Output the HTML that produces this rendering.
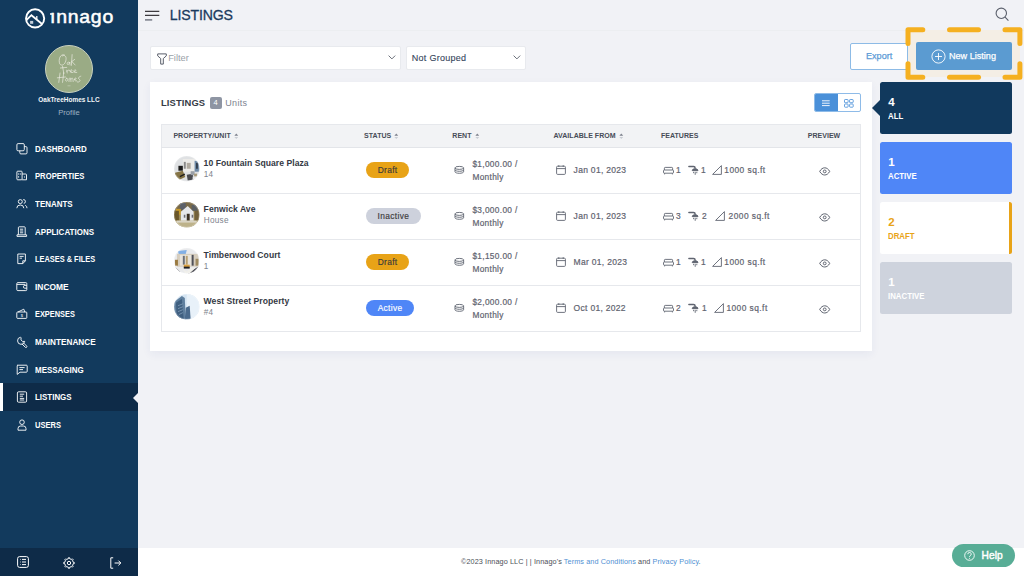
<!DOCTYPE html>
<html><head><meta charset="utf-8">
<style>
*{margin:0;padding:0;box-sizing:border-box}
html,body{width:1024px;height:576px;overflow:hidden}
body{position:relative;background:#f1f2f6;font-family:"Liberation Sans",sans-serif;color:#3a3f4a}
.abs{position:absolute}
svg{position:absolute;overflow:visible}
/* sidebar */
#side{position:absolute;left:0;top:0;width:138px;height:576px;background:#123a5d}
#sidebot{position:absolute;left:0;top:548px;width:138px;height:28px;background:#0e2b48}
.logo-t{position:absolute;left:49.6px;top:7.9px;font-size:18px;line-height:18px;color:#fff;letter-spacing:0.7px;-webkit-text-stroke:0.5px #fff;transform:scaleX(1.08);transform-origin:0 50%}
.avatar{position:absolute;left:45px;top:45px;width:48px;height:48px;border-radius:50%;background:#9aab85;border:1px solid #c9d1bf}
.org{position:absolute;left:0;width:138px;text-align:center;top:94.8px;font-size:7.6px;font-weight:bold;color:#f4f6f8;transform:scaleX(0.85);transform-origin:69px 50%}
.prof{position:absolute;left:0;width:138px;text-align:center;top:107.5px;font-size:7.6px;color:#9fb0c2}
.mi{position:absolute;left:35.4px;font-size:9.7px;font-weight:bold;color:#fff;line-height:10px;white-space:nowrap;transform-origin:0 50%}
.active-row{position:absolute;left:0;top:383px;width:138px;height:28px;background:#0e2b48}
.active-bar{position:absolute;left:0;top:383px;width:3px;height:28px;background:#fff}
.ico{stroke:#fff;fill:none;stroke-width:0.9}

.hdr-line{position:absolute;left:138px;top:30px;width:886px;height:1px;background:#eceef1}
.title{position:absolute;left:169.8px;top:5.3px;font-size:14.1px;color:#1b3b5e;line-height:20px;letter-spacing:-0.15px;-webkit-text-stroke:0.3px #1b3b5e}
.sel{position:absolute;top:46px;height:23.5px;background:#fff;border:1px solid #e8eaee;border-radius:2px}
.seltxt{position:absolute;top:53px;font-size:9.3px;line-height:11px;white-space:nowrap}
.btn-exp{position:absolute;left:850px;top:42.5px;width:58px;height:27px;background:#fff;border:1px solid #8dbbe6;border-radius:2px;color:#5b9ad6;font-size:9.8px;text-align:center;line-height:23px;-webkit-text-stroke:0.25px #5b9ad6}
.hl-fill{position:absolute;left:908px;top:29.8px;width:112px;height:47.5px;background:#f4eee5}
.btn-new{position:absolute;left:915.5px;top:42px;width:96.5px;height:27.8px;background:#5b9bd1;border-radius:2px}
.btn-new span{position:absolute;left:33.2px;top:8.1px;color:#fff;font-size:9.9px;line-height:11px;white-space:nowrap;-webkit-text-stroke:0.25px #fff;transform:scaleX(0.92);transform-origin:0 50%}
.card{position:absolute;left:150px;top:81.6px;width:722px;height:269.2px;background:#fff;box-shadow:0 3px 9px rgba(40,50,140,0.06)}
.ctitle{position:absolute;left:161px;top:97px;letter-spacing:0.12px;font-size:9.4px;font-weight:bold;color:#363b46;line-height:12px}
.badge4{position:absolute;left:209.5px;top:96.5px;width:12.3px;height:12.2px;background:#8e95a3;border-radius:2px;color:#fff;font-size:7.5px;text-align:center;line-height:12.2px}
.units{position:absolute;left:225.2px;top:98px;font-size:9px;letter-spacing:0.35px;color:#7d8390;line-height:11px}
.tog{position:absolute;left:814.3px;top:93.2px;width:46.4px;height:19.2px;border:1px solid #8ebbe8;border-radius:2px;background:#fff;overflow:hidden}
.tog .on{position:absolute;left:0;top:0;width:23px;height:100%;background:#4a90d9}
.tbl{position:absolute;left:161.3px;top:124px;width:699.4px;height:208px;border:1px solid #e6e8ec;background:#fff}
.th{position:absolute;left:161.3px;top:124px;width:699.4px;height:24px;background:#f2f3f5;border:1px solid #e6e8ec;border-bottom:1px solid #e3e5e9}
.thx{position:absolute;top:131.3px;font-size:7px;letter-spacing:0.04px;font-weight:bold;color:#474c57;line-height:9px;white-space:nowrap}
.rowline{position:absolute;left:161.3px;width:699.4px;height:1px;background:#e6e8ec}
.pname{position:absolute;left:203.6px;margin-top:-0.9px;font-size:8.6px;letter-spacing:0.04px;font-weight:bold;color:#343944;line-height:10px;white-space:nowrap}
.psub{position:absolute;left:203.8px;margin-top:-0.6px;letter-spacing:0.25px;font-size:8.2px;color:#7d838d;line-height:10px;white-space:nowrap}
.av{position:absolute;left:174.4px;width:25.3px;height:25.3px;border-radius:50%;overflow:hidden}
.pill{-webkit-text-stroke:0.15px currentColor;position:absolute;left:365.8px;height:16.3px;border-radius:9px;font-size:8.4px;letter-spacing:0.35px;line-height:16.8px;text-align:center;color:#3b3b3b}
.rent{-webkit-text-stroke:0.2px #5f6470;position:absolute;left:472.4px;margin-top:0.8px;font-size:8.3px;letter-spacing:0.33px;color:#5f6470;line-height:13.2px;white-space:nowrap}
.date{-webkit-text-stroke:0.2px #5f6470;position:absolute;left:573.6px;margin-top:0.6px;font-size:8.5px;letter-spacing:0.3px;color:#5f6470;line-height:10px;white-space:nowrap}
.feat{-webkit-text-stroke:0.2px #5f6470;position:absolute;margin-top:0.9px;font-size:8.4px;letter-spacing:0.45px;color:#5f6470;line-height:10px;white-space:nowrap}
.gi{stroke:#5f6470;fill:none;stroke-width:0.9}
.scard{position:absolute;left:880.2px;width:131.6px;height:52.2px;border-radius:2.5px}
.scard .n{position:absolute;left:8px;top:13px;font-size:11.5px;font-weight:bold;line-height:14px}
.scard .l{position:absolute;left:7.8px;top:29.3px;font-size:9px;font-weight:bold;line-height:10px;transform:scaleX(0.87);transform-origin:0 50%}
.footer{position:absolute;left:138px;top:548px;width:886px;height:28px;background:#fff}
.ftxt{position:absolute;left:461px;top:557px;font-size:7.25px;letter-spacing:0.1px;color:#4b4f58;line-height:9px;white-space:nowrap}
.ftxt a{color:#4f8fd3;text-decoration:none}
.help{position:absolute;left:952px;top:543.8px;width:62.7px;height:23.4px;border-radius:12px;background:#58ad96}
.help span{position:absolute;left:29.5px;top:6px;color:#fff;font-size:10.2px;font-weight:normal;-webkit-text-stroke:0.45px #fff;letter-spacing:0.1px;line-height:12px}
</style></head>
<body>
<div id="side"></div>
<div id="sidebot"></div>
<div class="active-row"></div>
<div class="active-bar"></div>
<svg style="left:133px;top:393px" width="5" height="10"><path d="M5 0 L0 5 L5 10 Z" fill="#f1f2f6"/></svg>

<!-- logo -->
<svg style="left:24px;top:7px" width="23" height="23" viewBox="0 0 23 23">
 <circle cx="11.1" cy="11.4" r="9.1" fill="none" stroke="#fff" stroke-width="1.9"/>
 <path d="M2.6 12.8 L7.4 8.2 L18.4 17.2" fill="none" stroke="#fff" stroke-width="1.85"/>
 <path d="M12.8 9 V12" stroke="#fff" stroke-width="1.3"/>
 <rect x="6.1" y="13.9" width="3.1" height="2.9" fill="#c5cfda"/>
</svg>
<div class="logo-t">&#305;nnago</div>
<div style="position:absolute;left:50px;top:12.8px;width:2.3px;height:2.2px;background:#fff;border-radius:1px"></div>
<div class="avatar"></div>
<svg style="left:45px;top:45px" width="48" height="48" viewBox="0 0 48 48"><g fill="none" stroke="#f3f1ea" stroke-width="0.65" stroke-linecap="round" opacity="0.95" transform="translate(1.6 0.4) scale(1.05 1)">
<path d="M17 9.5 C13 8 11 14 12.5 18.5 C14 21 18 19.5 18.5 14 C19 11 17 9 15 10.5"/>
<path d="M21.5 17 C19.5 15.5 18.8 19.5 20.6 19.2 C21.6 18.8 21.9 16.8 22.1 16.6 L22.3 19.6"/>
<path d="M24.3 9.2 L23.6 20 M23.9 16.2 L26.8 14 M24.3 16.4 L27.2 19.6"/>
<path d="M15.2 20.8 L16.4 28.2 M13.2 22.6 L19.2 22"/>
<path d="M19.2 24.8 L19.6 27.6 M19.4 26 C20 24.6 21 24.4 22 25"/>
<path d="M22.6 26.4 C25 26 24.6 24 23.1 24.5 C21.6 25.4 22.5 28 25.2 27"/>
<path d="M26.2 26.4 C28.6 26 28.2 24 26.7 24.5 C25.2 25.4 26.1 28 28.8 27"/>
<path d="M12.8 27.6 L11.6 37 M16.3 27.2 L15.2 37 M10.2 32.4 L18 31.6"/>
<path d="M19 32.8 C17.6 33.4 17.7 36.2 19.2 35.7 C20.7 35.2 20.4 32.4 19 32.8"/>
<path d="M21.3 36.2 L21.6 33 C22.1 32 23.1 32.4 23.1 34 L23.2 36.2 M23.1 34 C23.6 32 25.1 32.4 25.1 34 L25.3 36.2"/>
<path d="M26.6 34.4 C28.6 34 28.6 32.4 27.3 32.7 C26 33.2 26.2 36 28.6 35.5"/>
<path d="M32.6 30.8 C30.4 31.2 29.8 33 31.2 34 C32.8 35 31.4 37.2 29.2 36.6"/>
</g><path d="M22.5 40.8 h3" stroke="#d8dccd" stroke-width="0.5"/></svg>
<div class="org">OakTreeHomes LLC</div>
<div class="prof">Profile</div>

<div class="mi" style="top:143.7px;transform:scaleX(0.824)">DASHBOARD</div>
<div class="mi" style="top:171.3px;transform:scaleX(0.792)">PROPERTIES</div>
<div class="mi" style="top:198.9px;transform:scaleX(0.824)">TENANTS</div>
<div class="mi" style="top:226.5px;transform:scaleX(0.827)">APPLICATIONS</div>
<div class="mi" style="top:254.1px;transform:scaleX(0.765)">LEASES &amp; FILES</div>
<div class="mi" style="top:281.7px;transform:scaleX(0.868)">INCOME</div>
<div class="mi" style="top:309.3px;transform:scaleX(0.763)">EXPENSES</div>
<div class="mi" style="top:336.9px;transform:scaleX(0.848)">MAINTENANCE</div>
<div class="mi" style="top:364.5px;transform:scaleX(0.822)">MESSAGING</div>
<div class="mi" style="top:392.1px;transform:scaleX(0.819)">LISTINGS</div>
<div class="mi" style="top:419.7px;transform:scaleX(0.777)">USERS</div>

<svg class="ico" style="left:16px;top:142.7px" width="12" height="12" viewBox="0 0 12 12"><rect x="0.9" y="0.6" width="7.4" height="7.2" rx="1.2"/><path d="M8.3 3.6 h1.6 a1.1 1.1 0 0 1 1.1 1.1 v5.1 a1.1 1.1 0 0 1 -1.1 1.1 h-5 a1.1 1.1 0 0 1 -1.1 -1.1 v-2"/></svg>
<svg class="ico" style="left:16px;top:170.3px" width="12" height="12" viewBox="0 0 12 12"><rect x="0.9" y="1.2" width="5.2" height="8.6" rx="0.8"/><path d="M6.1 4 h3.6 a0.8 0.8 0 0 1 0.8 0.8 v5 h-4.4"/><path d="M2.6 3.4v1.2M4.3 3.4v1.2M2.6 6.2v1.4M8 7h1"/></svg>
<svg class="ico" style="left:16px;top:197.9px" width="12" height="12" viewBox="0 0 12 12"><circle cx="4.3" cy="3.6" r="2"/><path d="M0.8 10.2 a3.5 3.2 0 0 1 7 0"/><path d="M7.2 1.6 a1.9 1.9 0 0 1 0.6 3.8M9.2 7.3 a3 3 0 0 1 1.8 2.9"/></svg>
<svg class="ico" style="left:16px;top:225.5px" width="12" height="12" viewBox="0 0 12 12"><path d="M2.4 8.8 V1.6 a0.8 0.8 0 0 1 0.8 -0.8 h5.2 a0.8 0.8 0 0 1 0.8 0.8 v7.2"/><path d="M1 8.8 h9.6 v1.6 h-9.6 z"/><path d="M4 3.2h3.2M4 5h3.2M4 6.8h3.2"/></svg>
<svg class="ico" style="left:16px;top:253.1px" width="12" height="12" viewBox="0 0 12 12"><path d="M1.8 1 h7.6 v6.8 l-2.6 2.8 h-5 z"/><path d="M3.6 3.4h4M3.6 5.2h2.4M6.8 10.6 v-2.8 h2.6"/></svg>
<svg class="ico" style="left:16px;top:280.7px" width="12" height="12" viewBox="0 0 12 12"><rect x="0.8" y="1.6" width="10" height="8" rx="1"/><path d="M10.8 4.4 h-2 a1.4 1.4 0 0 0 0 2.8 h2"/><path d="M0.8 3.4 h8.6"/></svg>
<svg class="ico" style="left:16px;top:308.3px" width="12" height="12" viewBox="0 0 12 12"><rect x="0.8" y="4" width="10" height="6.4" rx="0.8"/><path d="M2 4 L7.8 1.2 L8.8 4"/><text x="5.8" y="9.2" font-size="4" text-anchor="middle" fill="#fff" stroke="none" font-family="Liberation Sans">$</text></svg>
<svg class="ico" style="left:16px;top:335.9px" width="12" height="12" viewBox="0 0 12 12"><path d="M4.5 1.2 a3.6 3.6 0 1 0 4.2 4.2 l-2.1 0.1 l-1.6 -1.6 l0.1 -2.1 z"/><path d="M7.2 6.6 l3.4 3.4 a0.9 0.9 0 0 1 -1.3 1.3 l-3.4 -3.4"/></svg>
<svg class="ico" style="left:16px;top:363.5px" width="12" height="12" viewBox="0 0 12 12"><path d="M1.6 1.2 h8.8 a0.8 0.8 0 0 1 0.8 0.8 v5.4 a0.8 0.8 0 0 1 -0.8 0.8 h-6.4 l-2.8 2.2 v-8.4 a0.8 0.8 0 0 1 0.8 -0.8z"/><path d="M3.4 3.6h5.2M3.4 5.6h3.6"/></svg>
<svg class="ico" style="left:16px;top:391.1px" width="12" height="12" viewBox="0 0 12 12"><rect x="1.4" y="0.8" width="9.2" height="10.4" rx="1.2"/><path d="M3.8 3.2h4.4M3.8 5.2h3.2M3.8 7.4h4.4M3.8 9h4.4"/></svg>
<svg class="ico" style="left:16px;top:418.7px" width="12" height="12" viewBox="0 0 12 12"><circle cx="6" cy="3.2" r="2.3"/><path d="M2 11.2 v-1.6 a2.6 2.6 0 0 1 2.6 -2.6 h2.8 a2.6 2.6 0 0 1 2.6 2.6 v1.6 z"/></svg>

<div class="hdr-line"></div>
<svg style="left:145px;top:10px" width="15" height="11" viewBox="0 0 15 11"><path d="M0 1.35h14.3M0 5.4h14.3" stroke="#3d3a3e" stroke-width="1.3"/><path d="M0 9.9h7.2" stroke="#626773" stroke-width="1.3"/></svg>
<div class="title">LISTINGS</div>
<svg style="left:995px;top:7px" width="15" height="15" viewBox="0 0 15 15"><circle cx="6.3" cy="6.3" r="5.2" fill="none" stroke="#5a5f6b" stroke-width="1.1"/><path d="M10.1 10.1 L13.4 13.6" stroke="#5a5f6b" stroke-width="1.1"/></svg>

<div class="sel" style="left:150.2px;width:251.3px"></div>
<svg style="left:156.5px;top:52.5px" width="10" height="12" viewBox="0 0 10 12"><path d="M0.7 0.9 h8.6 v2 l-3 2.6 v5.6 h-2.6 v-5.6 l-3 -2.6 z" fill="none" stroke="#5a5f6b" stroke-width="1"/></svg>
<div class="seltxt" style="left:168.2px;color:#9aa0a8">Filter</div>
<svg style="left:387.8px;top:55.2px" width="8" height="5" viewBox="0 0 8 5"><path d="M0.6 0.6 L3.9 3.9 L7.2 0.6" fill="none" stroke="#6b707a" stroke-width="1"/></svg>
<div class="sel" style="left:406px;width:119.8px"></div>
<div class="seltxt" style="left:411.8px;color:#34445a;-webkit-text-stroke:0.1px #34445a;font-size:9px;letter-spacing:0.28px">Not Grouped</div>
<svg style="left:512.8px;top:55px" width="8" height="5" viewBox="0 0 8 5"><path d="M0.6 0.6 L3.9 3.9 L7.2 0.6" fill="none" stroke="#6b707a" stroke-width="1"/></svg>

<div class="btn-exp"><span style="display:inline-block;transform:scaleX(0.93)">Export</span></div>
<div class="hl-fill"></div>
<svg style="left:905px;top:27px" width="118" height="54" viewBox="0 0 118 54">
 <g fill="none" stroke="#f5b020" stroke-width="5" stroke-linecap="round" stroke-linejoin="round">
  <path d="M3 16.5 V2.8 H17.8"/>
  <path d="M100 2.8 H114.9 V16.5"/>
  <path d="M114.9 36.8 V50.3 H100"/>
  <path d="M17.8 50.3 H3 V36.8"/>
  <path d="M44.5 2.8 H73.5"/>
  <path d="M44.5 50.3 H73.5"/>
 </g>
</svg>
<div class="btn-new"><span>New Listing</span></div>
<svg style="left:930.5px;top:48.5px" width="15" height="15" viewBox="0 0 15 15"><circle cx="7.5" cy="7.5" r="6.6" fill="none" stroke="#fff" stroke-width="0.9"/><path d="M7.5 4v7M4 7.5h7" stroke="#fff" stroke-width="0.9"/></svg>

<div class="card"></div>
<div class="ctitle">LISTINGS</div>
<div class="badge4">4</div>
<div class="units">Units</div>
<div class="tog"><div class="on"></div></div>
<svg style="left:822.2px;top:100px" width="8" height="7" viewBox="0 0 8 7"><path d="M0 0.8h7.7M0 3.2h7.7M0 5.6h7.7" stroke="#fff" stroke-width="0.9"/></svg>
<svg style="left:843.8px;top:99px" width="10" height="9" viewBox="0 0 10 9"><g fill="none" stroke="#4a90d9" stroke-width="0.85"><rect x="0.5" y="0.5" width="3.6" height="3.2" rx="0.7"/><rect x="5.6" y="0.5" width="3.6" height="3.2" rx="0.7"/><rect x="0.5" y="5" width="3.6" height="3.2" rx="0.7"/><rect x="5.6" y="5" width="3.6" height="3.2" rx="0.7"/></g></svg>

<div class="tbl"></div>
<div class="th"></div>
<div class="thx" style="left:173.4px">PROPERTY/UNIT</div>
<div class="thx" style="left:364.1px">STATUS</div>
<div class="thx" style="left:452.3px">RENT</div>
<div class="thx" style="left:553.5px">AVAILABLE FROM</div>
<div class="thx" style="left:660.9px">FEATURES</div>
<div class="thx" style="left:807.7px">PREVIEW</div>
<svg style="left:233.8px;top:133px" width="5" height="7" viewBox="0 0 5 7"><path d="M0.4 2.7 L2.3 0.6 L4.2 2.7Z" fill="#7d818c"/><path d="M0.4 3.9 L2.3 6 L4.2 3.9Z" fill="#c9ccd3"/></svg>
<svg style="left:393.8px;top:133px" width="5" height="7" viewBox="0 0 5 7"><path d="M0.4 2.7 L2.3 0.6 L4.2 2.7Z" fill="#7d818c"/><path d="M0.4 3.9 L2.3 6 L4.2 3.9Z" fill="#c9ccd3"/></svg>
<svg style="left:474.7px;top:133px" width="5" height="7" viewBox="0 0 5 7"><path d="M0.4 2.7 L2.3 0.6 L4.2 2.7Z" fill="#7d818c"/><path d="M0.4 3.9 L2.3 6 L4.2 3.9Z" fill="#c9ccd3"/></svg>
<svg style="left:618.6px;top:133px" width="5" height="7" viewBox="0 0 5 7"><path d="M0.4 2.7 L2.3 0.6 L4.2 2.7Z" fill="#7d818c"/><path d="M0.4 3.9 L2.3 6 L4.2 3.9Z" fill="#c9ccd3"/></svg>
<div class="rowline" style="top:193.3px"></div>
<div class="rowline" style="top:239.3px"></div>
<div class="rowline" style="top:285.3px"></div>
<div class="pname" style="top:158.8px">10 Fountain Square Plaza</div>
<div class="psub" style="top:170.1px">14</div>
<div class="pill" style="top:161.9px;width:43.6px;background:#e8a317;color:#3b3b3b">Draft</div>
<svg class="gi" style="left:453.8px;top:166.1px" width="11" height="9" viewBox="0 0 11 9"><ellipse cx="5.3" cy="1.9" rx="4.3" ry="1.5"/><path d="M1 1.9v1.9c0 0.8 1.9 1.5 4.3 1.5s4.3-0.7 4.3-1.5V1.9M1 3.8v2c0 0.8 1.9 1.5 4.3 1.5s4.3-0.7 4.3-1.5v-2"/></svg>
<div class="rent" style="top:156.8px">$1,000.00 /<br>Monthly</div>
<svg class="gi" style="left:555.5px;top:165.3px" width="10" height="10" viewBox="0 0 10 10"><rect x="0.6" y="1.2" width="8.8" height="8.2" rx="1"/><path d="M0.6 3.6h8.8M2.8 0.2v1.8M7.2 0.2v1.8"/></svg>
<div class="date" style="top:164.3px">Jan 01, 2023</div>
<svg class="gi" style="left:662.5px;top:166.9px" width="11" height="8" viewBox="0 0 11 8"><path d="M1.4 3V1.2a0.8 0.8 0 0 1 .8-.8h6.6a0.8 0.8 0 0 1 .8.8V3"/><rect x="0.5" y="3" width="10" height="3.2" rx="0.8"/><path d="M1.6 6.2v1.2M9.4 6.2v1.2"/></svg>
<div class="feat" style="left:676px;top:164.3px">1</div>
<svg class="gi" style="left:687.6px;top:164.9px" width="11" height="11" viewBox="0 0 11 11"><path d="M0.9 1.4h4.6a1.6 1.6 0 0 1 1.6 1.6v0.6" stroke-width="1.5" stroke-linecap="round"/><path d="M4.2 5.6 L5.2 4 h3.8 l1 1.6z" stroke-width="1" fill="#5f6470"/><path d="M5.6 6.8v1.4M7.2 6.8v3M8.8 6.8v1.4" stroke-width="0.9"/></svg>
<div class="feat" style="left:701.0px;top:164.3px">1</div>
<svg class="gi" style="left:712.4px;top:165.3px" width="10" height="10" viewBox="0 0 10 10"><path d="M0.6 9.4L9.4 0.6V9.4Z"/></svg>
<div class="feat" style="left:724.3px;top:164.3px">1000 sq.ft</div>
<svg class="gi" style="left:818.6px;top:167.0px" width="12" height="9" viewBox="0 0 12 9"><path d="M0.7 4.4C2 2 3.8 0.8 5.7 0.8s3.7 1.2 5 3.6C9.4 6.8 7.6 8 5.7 8S2 6.8 0.7 4.4z" stroke-width="1"/><circle cx="5.7" cy="4.4" r="1.4" stroke-width="1"/></svg>
<div class="pname" style="top:204.8px">Fenwick Ave</div>
<div class="psub" style="top:216.1px">House</div>
<div class="pill" style="top:207.9px;width:55.2px;background:#cdd1dc;color:#3b3b3b">Inactive</div>
<svg class="gi" style="left:453.8px;top:212.1px" width="11" height="9" viewBox="0 0 11 9"><ellipse cx="5.3" cy="1.9" rx="4.3" ry="1.5"/><path d="M1 1.9v1.9c0 0.8 1.9 1.5 4.3 1.5s4.3-0.7 4.3-1.5V1.9M1 3.8v2c0 0.8 1.9 1.5 4.3 1.5s4.3-0.7 4.3-1.5v-2"/></svg>
<div class="rent" style="top:202.8px">$3,000.00 /<br>Monthly</div>
<svg class="gi" style="left:555.5px;top:211.3px" width="10" height="10" viewBox="0 0 10 10"><rect x="0.6" y="1.2" width="8.8" height="8.2" rx="1"/><path d="M0.6 3.6h8.8M2.8 0.2v1.8M7.2 0.2v1.8"/></svg>
<div class="date" style="top:210.3px">Jan 01, 2023</div>
<svg class="gi" style="left:662.5px;top:212.9px" width="11" height="8" viewBox="0 0 11 8"><path d="M1.4 3V1.2a0.8 0.8 0 0 1 .8-.8h6.6a0.8 0.8 0 0 1 .8.8V3"/><rect x="0.5" y="3" width="10" height="3.2" rx="0.8"/><path d="M1.6 6.2v1.2M9.4 6.2v1.2"/></svg>
<div class="feat" style="left:676px;top:210.3px">3</div>
<svg class="gi" style="left:687.6px;top:210.9px" width="11" height="11" viewBox="0 0 11 11"><path d="M0.9 1.4h4.6a1.6 1.6 0 0 1 1.6 1.6v0.6" stroke-width="1.5" stroke-linecap="round"/><path d="M4.2 5.6 L5.2 4 h3.8 l1 1.6z" stroke-width="1" fill="#5f6470"/><path d="M5.6 6.8v1.4M7.2 6.8v3M8.8 6.8v1.4" stroke-width="0.9"/></svg>
<div class="feat" style="left:702.0px;top:210.3px">2</div>
<svg class="gi" style="left:714.9px;top:211.3px" width="10" height="10" viewBox="0 0 10 10"><path d="M0.6 9.4L9.4 0.6V9.4Z"/></svg>
<div class="feat" style="left:728.6px;top:210.3px">2000 sq.ft</div>
<svg class="gi" style="left:818.6px;top:213.0px" width="12" height="9" viewBox="0 0 12 9"><path d="M0.7 4.4C2 2 3.8 0.8 5.7 0.8s3.7 1.2 5 3.6C9.4 6.8 7.6 8 5.7 8S2 6.8 0.7 4.4z" stroke-width="1"/><circle cx="5.7" cy="4.4" r="1.4" stroke-width="1"/></svg>
<div class="pname" style="top:250.8px">Timberwood Court</div>
<div class="psub" style="top:262.1px">1</div>
<div class="pill" style="top:253.9px;width:43.6px;background:#e8a317;color:#3b3b3b">Draft</div>
<svg class="gi" style="left:453.8px;top:258.1px" width="11" height="9" viewBox="0 0 11 9"><ellipse cx="5.3" cy="1.9" rx="4.3" ry="1.5"/><path d="M1 1.9v1.9c0 0.8 1.9 1.5 4.3 1.5s4.3-0.7 4.3-1.5V1.9M1 3.8v2c0 0.8 1.9 1.5 4.3 1.5s4.3-0.7 4.3-1.5v-2"/></svg>
<div class="rent" style="top:248.8px">$1,150.00 /<br>Monthly</div>
<svg class="gi" style="left:555.5px;top:257.3px" width="10" height="10" viewBox="0 0 10 10"><rect x="0.6" y="1.2" width="8.8" height="8.2" rx="1"/><path d="M0.6 3.6h8.8M2.8 0.2v1.8M7.2 0.2v1.8"/></svg>
<div class="date" style="top:256.3px">Mar 01, 2023</div>
<svg class="gi" style="left:662.5px;top:258.9px" width="11" height="8" viewBox="0 0 11 8"><path d="M1.4 3V1.2a0.8 0.8 0 0 1 .8-.8h6.6a0.8 0.8 0 0 1 .8.8V3"/><rect x="0.5" y="3" width="10" height="3.2" rx="0.8"/><path d="M1.6 6.2v1.2M9.4 6.2v1.2"/></svg>
<div class="feat" style="left:676px;top:256.3px">1</div>
<svg class="gi" style="left:687.6px;top:256.9px" width="11" height="11" viewBox="0 0 11 11"><path d="M0.9 1.4h4.6a1.6 1.6 0 0 1 1.6 1.6v0.6" stroke-width="1.5" stroke-linecap="round"/><path d="M4.2 5.6 L5.2 4 h3.8 l1 1.6z" stroke-width="1" fill="#5f6470"/><path d="M5.6 6.8v1.4M7.2 6.8v3M8.8 6.8v1.4" stroke-width="0.9"/></svg>
<div class="feat" style="left:701.0px;top:256.3px">1</div>
<svg class="gi" style="left:712.4px;top:257.3px" width="10" height="10" viewBox="0 0 10 10"><path d="M0.6 9.4L9.4 0.6V9.4Z"/></svg>
<div class="feat" style="left:724.3px;top:256.3px">1000 sq.ft</div>
<svg class="gi" style="left:818.6px;top:259.0px" width="12" height="9" viewBox="0 0 12 9"><path d="M0.7 4.4C2 2 3.8 0.8 5.7 0.8s3.7 1.2 5 3.6C9.4 6.8 7.6 8 5.7 8S2 6.8 0.7 4.4z" stroke-width="1"/><circle cx="5.7" cy="4.4" r="1.4" stroke-width="1"/></svg>
<div class="pname" style="top:296.8px">West Street Property</div>
<div class="psub" style="top:308.1px">#4</div>
<div class="pill" style="top:299.9px;width:48.6px;background:#4f86f7;color:#fff">Active</div>
<svg class="gi" style="left:453.8px;top:304.1px" width="11" height="9" viewBox="0 0 11 9"><ellipse cx="5.3" cy="1.9" rx="4.3" ry="1.5"/><path d="M1 1.9v1.9c0 0.8 1.9 1.5 4.3 1.5s4.3-0.7 4.3-1.5V1.9M1 3.8v2c0 0.8 1.9 1.5 4.3 1.5s4.3-0.7 4.3-1.5v-2"/></svg>
<div class="rent" style="top:294.8px">$2,000.00 /<br>Monthly</div>
<svg class="gi" style="left:555.5px;top:303.3px" width="10" height="10" viewBox="0 0 10 10"><rect x="0.6" y="1.2" width="8.8" height="8.2" rx="1"/><path d="M0.6 3.6h8.8M2.8 0.2v1.8M7.2 0.2v1.8"/></svg>
<div class="date" style="top:302.3px">Oct 01, 2022</div>
<svg class="gi" style="left:662.5px;top:304.9px" width="11" height="8" viewBox="0 0 11 8"><path d="M1.4 3V1.2a0.8 0.8 0 0 1 .8-.8h6.6a0.8 0.8 0 0 1 .8.8V3"/><rect x="0.5" y="3" width="10" height="3.2" rx="0.8"/><path d="M1.6 6.2v1.2M9.4 6.2v1.2"/></svg>
<div class="feat" style="left:676px;top:302.3px">2</div>
<svg class="gi" style="left:687.6px;top:302.9px" width="11" height="11" viewBox="0 0 11 11"><path d="M0.9 1.4h4.6a1.6 1.6 0 0 1 1.6 1.6v0.6" stroke-width="1.5" stroke-linecap="round"/><path d="M4.2 5.6 L5.2 4 h3.8 l1 1.6z" stroke-width="1" fill="#5f6470"/><path d="M5.6 6.8v1.4M7.2 6.8v3M8.8 6.8v1.4" stroke-width="0.9"/></svg>
<div class="feat" style="left:702.0px;top:302.3px">1</div>
<svg class="gi" style="left:713.5px;top:303.3px" width="10" height="10" viewBox="0 0 10 10"><path d="M0.6 9.4L9.4 0.6V9.4Z"/></svg>
<div class="feat" style="left:726.4px;top:302.3px">1000 sq.ft</div>
<svg class="gi" style="left:818.6px;top:305.0px" width="12" height="9" viewBox="0 0 12 9"><path d="M0.7 4.4C2 2 3.8 0.8 5.7 0.8s3.7 1.2 5 3.6C9.4 6.8 7.6 8 5.7 8S2 6.8 0.7 4.4z" stroke-width="1"/><circle cx="5.7" cy="4.4" r="1.4" stroke-width="1"/></svg>

<svg style="left:174.1px;top:156.1px" width="25.5" height="25.5" viewBox="0 0 26 26"><defs><clipPath id="c0"><circle cx="13" cy="13" r="13"/></clipPath></defs><g clip-path="url(#c0)"><rect width="26" height="26" fill="#dfe1e3"/>
<rect x="9" y="3" width="12" height="13" fill="#ecebe8"/>
<rect x="10" y="6" width="2" height="7" fill="#8a8a8a"/>
<rect x="13" y="7" width="4" height="6" fill="#b0aaa0"/>
<rect x="21" y="5" width="5" height="11" fill="#6f8aa6"/>
<rect x="22.5" y="7" width="1.8" height="6" fill="#2f3a48"/>
<rect x="4.5" y="10" width="4.5" height="5" fill="#1c1c1c"/>
<path d="M1 17 L9 15 L11.5 21.5 L5 24.5 L1 23Z" fill="#857446"/>
<path d="M6 21 L11 18.5" stroke="#1e1e1e" stroke-width="1.4"/>
<path d="M13 19 L19 18 L20 24 L14 25Z" fill="#4a4b50"/>
<rect x="17" y="15.5" width="4" height="4" fill="#9a9fa6"/>
<rect x="20.5" y="18" width="3" height="3" fill="#a89a7a"/>
<rect x="19" y="21" width="7" height="5" fill="#e9e9ea"/></g><circle cx="13" cy="13" r="12.8" fill="none" stroke="#fff" stroke-opacity="0.5" stroke-width="0.5"/></svg>
<svg style="left:174.1px;top:202.1px" width="25.5" height="25.5" viewBox="0 0 26 26"><defs><clipPath id="c1"><circle cx="13" cy="13" r="13"/></clipPath></defs><g clip-path="url(#c1)"><rect width="26" height="26" fill="#9c8a58"/>
<rect x="0" y="0" width="26" height="9" fill="#7a6a48"/>
<rect x="6" y="1" width="6" height="7" fill="#5c6068"/>
<rect x="18" y="3" width="6" height="6" fill="#5a5e62"/>
<rect x="2" y="7" width="5" height="6" fill="#c89a2a"/>
<path d="M7 10 L14 4 L20 10 V20 H7Z" fill="#e6e7ea"/>
<rect x="13" y="12" width="3" height="8" fill="#3a2e20"/>
<rect x="10" y="13" width="1.6" height="3" fill="#6a6a72"/>
<rect x="18" y="13" width="1.6" height="3" fill="#6a6a72"/>
<rect x="0" y="9" width="5" height="10" fill="#6a5628"/>
<rect x="21" y="9" width="5" height="10" fill="#72603a"/>
<rect x="0" y="19" width="26" height="7" fill="#bdb28a"/>
<rect x="3" y="19" width="20" height="2" fill="#d9d4c4"/></g><circle cx="13" cy="13" r="12.8" fill="none" stroke="#fff" stroke-opacity="0.5" stroke-width="0.5"/></svg>
<svg style="left:174.1px;top:248.1px" width="25.5" height="25.5" viewBox="0 0 26 26"><defs><clipPath id="c2"><circle cx="13" cy="13" r="13"/></clipPath></defs><g clip-path="url(#c2)"><rect width="26" height="26" fill="#e9eaec"/>
<path d="M4 3 L13 2 L12 6 L5 7Z" fill="#82b0e6"/>
<rect x="3" y="6" width="22" height="13" fill="#d6cdbd"/>
<rect x="6" y="7" width="12" height="11" fill="#e8e4dc"/>
<rect x="9" y="8" width="2" height="9" fill="#6b6f78"/>
<rect x="12" y="8" width="2" height="9" fill="#b9a070"/>
<rect x="18" y="7" width="2" height="11" fill="#4f5058"/>
<rect x="1" y="12" width="3" height="6" fill="#9a7a40"/>
<rect x="22" y="11" width="3" height="7" fill="#9e8a60"/>
<rect x="10" y="17" width="6" height="3" fill="#d9a040"/>
<rect x="10" y="19" width="6" height="2" fill="#1e1e22"/>
<path d="M0 18 L8 26 H0Z" fill="#3a3a40"/>
<path d="M26 18 L14 26 H26Z" fill="#3c3c44"/>
<path d="M8 21 L12 26 H16 L22 20 L18 20 L13 24Z" fill="#f0efea"/></g><circle cx="13" cy="13" r="12.8" fill="none" stroke="#fff" stroke-opacity="0.5" stroke-width="0.5"/></svg>
<svg style="left:174.1px;top:294.1px" width="25.5" height="25.5" viewBox="0 0 26 26"><defs><clipPath id="c3"><circle cx="13" cy="13" r="13"/></clipPath></defs><g clip-path="url(#c3)"><rect width="26" height="26" fill="#d4e4f2"/>
<rect x="13" y="0" width="13" height="26" fill="#e8f1f9"/>
<path d="M0 8 L4 5 L8 2 L11 4 L12 26 H0Z" fill="#5f7f9e"/>
<path d="M2 9 L8 5 L10 26 H3Z" fill="#3f5f80"/>
<path d="M12 14 L16 12 L17 26 H11Z" fill="#4a6a8c"/>
<path d="M4 12 L9 10 M4 15 L9 13 M4 18 L9 16 M5 21 L9 19" stroke="#9ab4cc" stroke-width="0.6"/></g><circle cx="13" cy="13" r="12.8" fill="none" stroke="#fff" stroke-opacity="0.5" stroke-width="0.5"/></svg>
<div class="scard" style="top:81.7px;background:#11395d;color:#fff"><div class="n">4</div><div class="l">ALL</div></div>
<svg style="left:872px;top:98.7px" width="9" height="18" viewBox="0 0 9 18"><path d="M9 0 L0 9 L9 18Z" fill="#11395d"/></svg>
<div class="scard" style="top:142px;background:#4f86f7;color:#fff"><div class="n">1</div><div class="l">ACTIVE</div></div>
<div class="scard" style="top:202.2px;background:#fff;color:#e8a317;border-right:3px solid #e8a317"><div class="n">2</div><div class="l">DRAFT</div></div>
<div class="scard" style="top:262.2px;background:#ced3dd;color:#fff"><div class="n">1</div><div class="l">INACTIVE</div></div>

<div class="footer"></div>
<div class="ftxt">&copy;2023 Innago LLC | | Innago's <a>Terms and Conditions</a> and <a>Privacy Policy</a>.</div>
<div class="help"><span>Help</span></div>
<svg style="left:964px;top:550px" width="11" height="11" viewBox="0 0 11 11"><circle cx="5.5" cy="5.5" r="4.8" fill="none" stroke="#fff" stroke-width="0.9"/><path d="M3.8 4.2a1.7 1.7 0 1 1 2.4 1.5c-.5.3-.7.6-.7 1.2" fill="none" stroke="#fff" stroke-width="0.9"/><circle cx="5.5" cy="8.2" r="0.5" fill="#fff"/></svg>

<svg class="ico" style="left:16.5px;top:556.3px;stroke-width:1" width="12" height="12" viewBox="0 0 12 12"><rect x="0.6" y="0.6" width="10.8" height="10.8" rx="2"/><path d="M3 3.4h.6M3 6h.6M3 8.6h.6M5 3.4h4M5 6h4M5 8.6h4"/></svg>
<svg class="ico" style="left:63.3px;top:556.5px;stroke-width:1" width="12" height="12" viewBox="0 0 12 12"><path d="M10.00 5.12 L11.26 5.37 L11.26 6.63 L10.00 6.88 L9.79 7.57 L9.45 8.21 L10.17 9.28 L9.28 10.17 L8.21 9.45 L7.57 9.79 L6.88 10.00 L6.63 11.26 L5.37 11.26 L5.12 10.00 L4.43 9.79 L3.79 9.45 L2.72 10.17 L1.83 9.28 L2.55 8.21 L2.21 7.57 L2.00 6.88 L0.74 6.63 L0.74 5.37 L2.00 5.12 L2.21 4.43 L2.55 3.79 L1.83 2.72 L2.72 1.83 L3.79 2.55 L4.43 2.21 L5.12 2.00 L5.37 0.74 L6.63 0.74 L6.88 2.00 L7.57 2.21 L8.21 2.55 L9.28 1.83 L10.17 2.72 L9.45 3.79 L9.79 4.43Z" stroke-linejoin="round"/><circle cx="6" cy="6" r="1.7"/></svg>
<svg class="ico" style="left:110.3px;top:556.5px;stroke-width:1" width="12" height="12" viewBox="0 0 12 12"><path d="M3.2 0.8H0.8v10.4h2.4M4.6 6h6.2M8.4 3.6L10.8 6L8.4 8.4"/></svg>
</body></html>
